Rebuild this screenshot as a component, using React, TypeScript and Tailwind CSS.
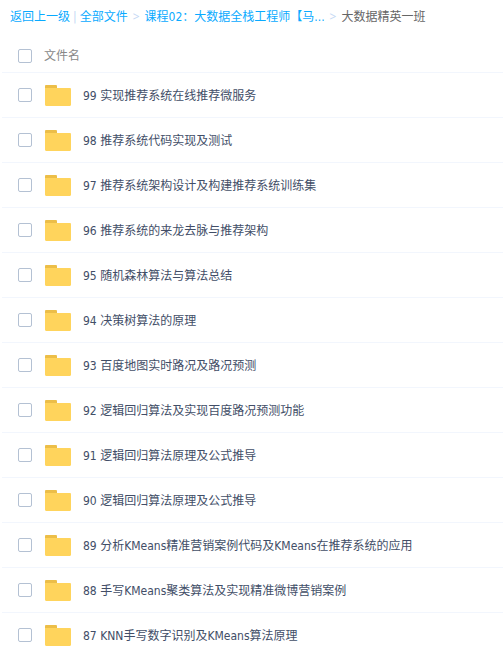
import React, { useState } from "react";

interface Folder {
  id: number;
  name: string;
}

const FOLDERS: Folder[] = [
  { id: 99, name: "99 实现推荐系统在线推荐微服务" },
  { id: 98, name: "98 推荐系统代码实现及测试" },
  { id: 97, name: "97 推荐系统架构设计及构建推荐系统训练集" },
  { id: 96, name: "96 推荐系统的来龙去脉与推荐架构" },
  { id: 95, name: "95 随机森林算法与算法总结" },
  { id: 94, name: "94 决策树算法的原理" },
  { id: 93, name: "93 百度地图实时路况及路况预测" },
  { id: 92, name: "92 逻辑回归算法及实现百度路况预测功能" },
  { id: 91, name: "91 逻辑回归算法原理及公式推导" },
  { id: 90, name: "90 逻辑回归算法原理及公式推导" },
  { id: 89, name: "89 分析KMeans精准营销案例代码及KMeans在推荐系统的应用" },
  { id: 88, name: "88 手写KMeans聚类算法及实现精准微博营销案例" },
  { id: 87, name: "87 KNN手写数字识别及KMeans算法原理" },
];

const CHECKBOX =
  "block size-3.5 appearance-none rounded-xs border border-[#b4c1d3] bg-white checked:border-[#09aaff] checked:bg-[#09aaff]";

function FolderIcon() {
  return (
    <svg width="26" height="21" viewBox="0 0 26 21" className="block shrink-0" aria-hidden="true">
      <path d="M0 5V1.200C0 .5.5 0 1.200 0h9.600C11.500 0 12 .5 12 1.200V5z" fill="#ecbe48" />
      <path d="M0 3h24.800c.7 0 1.200.5 1.200 1.200v15.600c0 .7-.5 1.200-1.200 1.200H1.200C.5 21 0 20.500 0 19.800z" fill="#ffd45c" />
    </svg>
  );
}

function Separator() {
  return <span className="px-[5px] font-['Noto_Sans',sans-serif] text-[#c4d8f4]">&gt;</span>;
}

export default function App() {
  const [selected, setSelected] = useState<number[]>([]);

  const toggle = (id: number) => {
    setSelected(selected.includes(id) ? selected.filter((s) => s !== id) : [...selected, id]);
  };

  const toggleAll = () => {
    setSelected(selected.length === FOLDERS.length ? [] : FOLDERS.map((f) => f.id));
  };

  return (
    <main className="bg-white font-['DejaVu_Sans_Condensed','Noto_Sans_CJK_SC',sans-serif] text-xs text-[#424e67]">
      <nav className="flex h-10 pt-2 pl-2.5 whitespace-nowrap leading-[18px]">
        <a href="#back" className="text-[#09aaff]">返回上一级</a>
        <span className="px-[3px] text-[#c4d8f4]">|</span>
        <a href="#all" className="text-[#09aaff]">全部文件</a>
        <Separator />
        <a href="#course" className="text-[#09aaff]">课程02：大数据全栈工程师【马...</a>
        <Separator />
        <span className="text-[#666666]">大数据精英一班</span>
      </nav>

      <div className="pl-0.5">
        <table className="w-full border-separate border-spacing-0">
          <thead>
            <tr className="h-[33px]">
              <th className="w-[42px] border-b border-[#f2f6fd] p-0 pl-4">
                <input
                  type="checkbox"
                  aria-label="全选"
                  checked={selected.length === FOLDERS.length}
                  onChange={toggleAll}
                  className={CHECKBOX}
                />
              </th>
              <th className="border-b border-[#f2f6fd] p-0 text-left font-normal text-[#888888]">文件名</th>
            </tr>
          </thead>
          <tbody>
            {FOLDERS.map((folder) => (
              <tr key={folder.id} className="group h-[45px] last:h-11">
                <td className="border-b border-[#f2f6fd] p-0 pl-4 group-last:border-b-0">
                  <input
                    id={`folder-${folder.id}`}
                    type="checkbox"
                    checked={selected.includes(folder.id)}
                    onChange={() => toggle(folder.id)}
                    className={CHECKBOX}
                  />
                </td>
                <td className="border-b border-[#f2f6fd] p-0 pl-px group-last:border-b-0">
                  <label htmlFor={`folder-${folder.id}`} className="flex items-center gap-3">
                    <FolderIcon />
                    <span className="pt-0.5">{folder.name}</span>
                  </label>
                </td>
              </tr>
            ))}
          </tbody>
        </table>
      </div>
    </main>
  );
}
